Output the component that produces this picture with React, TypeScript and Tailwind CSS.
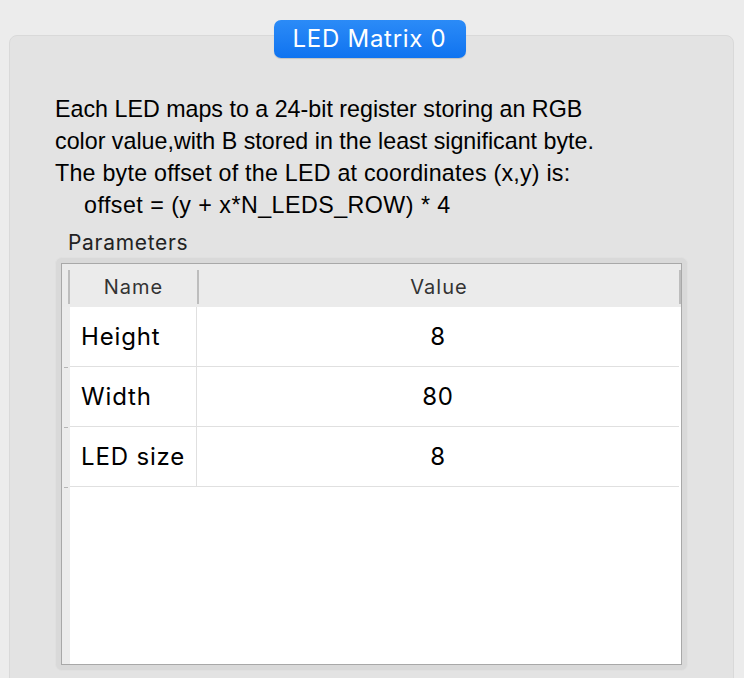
const rows = [
  { name: "Height", value: "8" },
  { name: "Width", value: "80" },
  { name: "LED size", value: "8" },
];

function HeaderSep() {
  return <div className="h-[34px] w-[2px] shrink-0 bg-[#bdbdbd]" />;
}

export default function App() {
  return (
    <div className="h-[678px] w-[744px] overflow-hidden bg-[#ececec] pt-[35px] pl-[9px] pr-[10px] font-['Inter','Liberation_Sans',sans-serif] text-black">
      <div className="relative rounded-[8px] border border-[#d9d9d9] bg-[#e3e3e3] px-[45px] pt-[57px] pb-[40px]">
        <div className="absolute -top-[16px] left-1/2 -ml-[2px] flex h-[38px] w-[192px] -translate-x-1/2 items-center justify-center rounded-[7px] bg-gradient-to-b from-[#2b8bf7] to-[#0e73f0] text-[24px] tracking-[0.03em] text-white shadow-[0_1px_1px_rgba(0,0,0,0.15)]">
          LED Matrix 0
        </div>

        <div className="font-['Liberation_Sans',sans-serif] text-[23.25px] leading-[32px]">
          <div>Each LED maps to a 24-bit register storing an RGB</div>
          <div>color value,with B stored in the least significant byte.</div>
          <div className="tracking-[0.01em]">The byte offset of the LED at coordinates (x,y) is:</div>
          <div className="pl-[29px] tracking-[0.02em]">offset = (y + x*N_LEDS_ROW) * 4</div>
        </div>

        <div className="mt-[10px] pl-[13px] text-[21px] leading-[24px] tracking-[0.033em] text-[#222]">Parameters</div>

        <div className="mt-[2px] rounded-[7px] border border-[#e0e0e0] bg-[#d9d9d9] p-[5px]">
          <div className="flex h-[402px] flex-col border border-[#a8a8a8] bg-white">
            <div className="flex h-[43px] shrink-0 items-center bg-[#ebebeb] pt-[2px] text-[20px] tracking-[0.05em] text-[#333]">
              <div className="w-[6px] shrink-0" />
              <HeaderSep />
              <div className="w-[127px] shrink-0 text-center">Name</div>
              <HeaderSep />
              <div className="flex-1 text-center">Value</div>
              <HeaderSep />
            </div>
            <div className="flex flex-1">
              <div className="w-[8px] shrink-0 bg-[#ececec]">
                {rows.map((r) => (
                  <div key={r.name} className="flex h-[60px] items-end">
                    <div className="mb-[-1px] ml-[2px] h-[1px] w-[4px] bg-[#b5b5b5]" />
                  </div>
                ))}
              </div>
              <div className="flex-1">
                {rows.map((r) => (
                  <div key={r.name} className="mr-[2px] flex h-[60px] items-center border-b border-[#e0e0e0] text-[24px] tracking-[0.035em]">
                    <div className="flex h-full w-[127px] shrink-0 items-center border-r border-[#e0e0e0] pl-[11px]">{r.name}</div>
                    <div className="flex-1 text-center">{r.value}</div>
                  </div>
                ))}
              </div>
            </div>
          </div>
        </div>
      </div>
    </div>
  );
}
